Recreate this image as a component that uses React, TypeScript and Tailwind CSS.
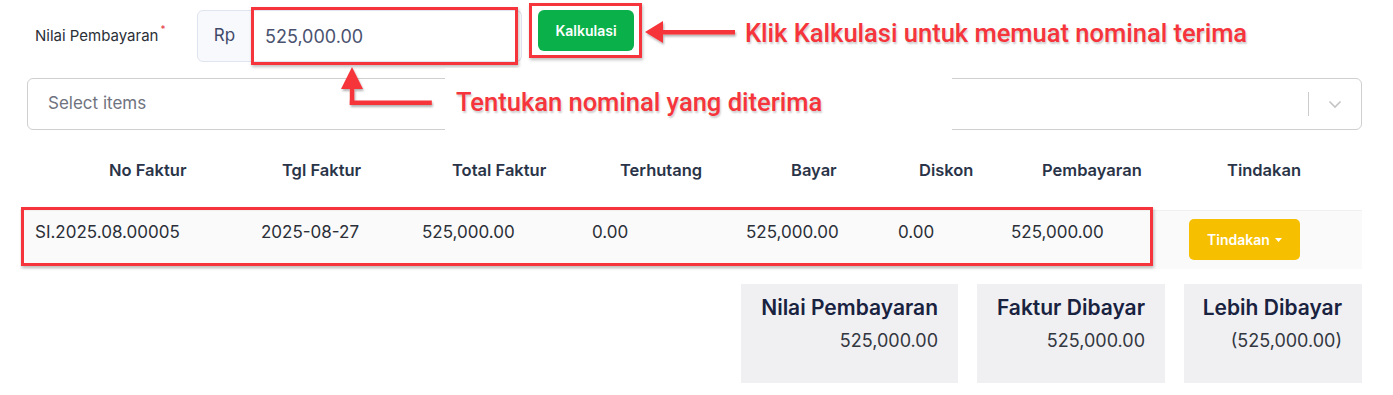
import React from "react";

const RED = "#f6343b";

const headers = [
  { label: "No Faktur", w: "w-[226px]", pl: "pl-[89px]" },
  { label: "Tgl Faktur", w: "w-[161px]", pl: "pl-[36px]" },
  { label: "Total Faktur", w: "w-[170px]", pl: "pl-[45px]" },
  { label: "Terhutang", w: "w-[154px]", pl: "pl-[43px]" },
  { label: "Bayar", w: "w-[152px]", pl: "pl-[60px]" },
  { label: "Diskon", w: "w-[113px]", pl: "pl-[36px]" },
  { label: "Pembayaran", w: "w-[178px]", pl: "pl-[46px]" },
  { label: "Tindakan", w: "w-[188px]", pl: "pl-[53px]" },
];

const row = [
  { value: "SI.2025.08.00005", w: "w-[226px]" },
  { value: "2025-08-27", w: "w-[161px]" },
  { value: "525,000.00", w: "w-[170px]" },
  { value: "0.00", w: "w-[154px]" },
  { value: "525,000.00", w: "w-[152px]" },
  { value: "0.00", w: "w-[113px]" },
  { value: "525,000.00", w: "w-[178px]" },
];

const summary = [
  { title: "Nilai Pembayaran", value: "525,000.00", w: "w-[217px]" },
  { title: "Faktur Dibayar", value: "525,000.00", w: "w-[188px]" },
  { title: "Lebih Dibayar", value: "(525,000.00)", w: "w-[178px]" },
];

export default function App() {
  return (
    <div className="relative w-[1393px] h-[395px] overflow-hidden bg-white font-['Inter',sans-serif]">
      {/* payment input */}
      <div className="flex pl-[35px] pt-[10px]">
        <label className="w-[162px] flex items-center text-[15px] text-[#2b2f38]">
          Nilai Pembayaran
          <span className="self-start mt-[12px] ml-[2px] text-[10px] text-[#e53945]">*</span>
        </label>
        <div className="w-[55px] h-[52px] flex items-center justify-center rounded-l-[6px] border border-[#e0e4ee] bg-[#f8f9fc] text-[17px] text-[#3f4a6b]">
          Rp
        </div>
        <div className="w-[270px] h-[52px] flex items-center pl-[13px] rounded-r-[6px] border border-l-0 border-[#e0e4ee] text-[18px] text-[#4a5270]">
          525,000.00
        </div>
        <button className="ml-[16px] w-[96px] h-[41px] rounded-[6px] bg-[#0ab14a] text-white text-[14px] font-semibold">
          Kalkulasi
        </button>
      </div>

      {/* invoice select */}
      <div className="ml-[27px] mt-[16px] w-[1335px] h-[52px] flex items-center rounded-[6px] border border-[#cfcfcf]">
        <span className="flex-1 pl-[20px] text-[17px] text-[#6f7380]">Select items</span>
        <span className="w-px h-[24px] bg-[#cccccc]" />
        <span className="w-[52px] flex items-center justify-center">
          <svg width="14" height="9" viewBox="0 0 14 9" fill="none">
            <path d="M1.5 1.5l5.5 5.5 5.5-5.5" stroke="#c4c4c4" strokeWidth="1.6" />
          </svg>
        </span>
      </div>

      {/* table header */}
      <div className="ml-[20px] mt-[18px] h-[44px] flex items-center">
        {headers.map((h) => (
          <div key={h.label} className={`${h.w} ${h.pl} text-[16.5px] font-semibold text-[#2a3448]`}>
            {h.label}
          </div>
        ))}
      </div>

      {/* table row */}
      <div className="ml-[20px] mt-[18px] w-[1342px] h-[59px] flex bg-[#fafafa] border-t border-[#f0f0f0]">
        {row.map((c, i) => (
          <div key={i} className={`${c.w} pl-[15px] pt-[9px] text-[17px] text-[#2b2f38]`}>
            {c.value}
          </div>
        ))}
        <div className="w-[188px] pl-[15px] pt-[8px]">
          <button className="w-[111px] h-[41px] rounded-[5px] bg-[#f6c000] text-white text-[14px] font-semibold flex items-center justify-center gap-[5px]">
            Tindakan
            <svg width="7" height="4" viewBox="0 0 7 4">
              <path d="M0 0h7L3.5 4z" fill="white" />
            </svg>
          </button>
        </div>
      </div>

      {/* summary */}
      <div className="mt-[15px] pr-[31px] flex justify-end gap-[19px]">
        {summary.map((s) => (
          <div key={s.title} className={`${s.w} h-[99px] bg-[#f0f0f3] pr-[20px] pt-[9px] text-right`}>
            <div className="text-[21px] font-semibold text-[#19223f] leading-[29px]">{s.title}</div>
            <div className="mt-[5px] text-[18px] text-[#333740]">{s.value}</div>
          </div>
        ))}
      </div>

      {/* annotations */}
      <div className="absolute left-[251px] top-[7px] w-[267px] h-[58px] border-[3px] border-[#f6343b] shadow-[1px_2px_3px_rgba(0,0,0,0.25)]" />
      <div className="absolute left-[529px] top-[3px] w-[113px] h-[55px] border-[3px] border-[#f6343b] shadow-[1px_2px_3px_rgba(0,0,0,0.25)]" />
      <div className="absolute left-[21px] top-[207px] w-[1132px] h-[59px] border-[3px] border-[#f6343b] shadow-[1px_2px_3px_rgba(0,0,0,0.25)]" />

      <svg className="absolute left-[640px] top-[16px]" width="100" height="34" viewBox="0 0 100 34">
        <defs>
          <filter id="sh1" x="-20%" y="-20%" width="140%" height="160%">
            <feDropShadow dx="1" dy="2" stdDeviation="1" floodColor="#000" floodOpacity="0.3" />
          </filter>
        </defs>
        <g filter="url(#sh1)" fill={RED}>
          <path d="M5 16 L23 5 L23 27 Z" />
          <rect x="22" y="14" width="73" height="4.5" />
        </g>
      </svg>
      <div className="absolute left-[745px] top-[14px] font-['Roboto',sans-serif] text-[25.5px] font-medium text-[#f6343b] [text-shadow:1px_2px_2px_rgba(0,0,0,0.2)]">
        Klik Kalkulasi untuk memuat nominal terima
      </div>

      <div className="absolute left-[445px] top-[68px] w-[507px] h-[68px] bg-white flex items-center pl-[11px] font-['Roboto',sans-serif] text-[25.5px] font-medium text-[#f6343b] [text-shadow:1px_2px_2px_rgba(0,0,0,0.2)]">
        Tentukan nominal yang diterima
      </div>
      <svg className="absolute left-[335px] top-[62px]" width="105" height="50" viewBox="0 0 105 50">
        <defs>
          <filter id="sh2" x="-20%" y="-20%" width="140%" height="160%">
            <feDropShadow dx="1" dy="2" stdDeviation="1" floodColor="#000" floodOpacity="0.3" />
          </filter>
        </defs>
        <g filter="url(#sh2)" fill={RED}>
          <path d="M17 5 L28 27 L6 27 Z" />
          <rect x="14.8" y="26" width="4.5" height="17" />
          <rect x="14.8" y="38.5" width="82" height="4.5" />
        </g>
      </svg>
    </div>
  );
}
